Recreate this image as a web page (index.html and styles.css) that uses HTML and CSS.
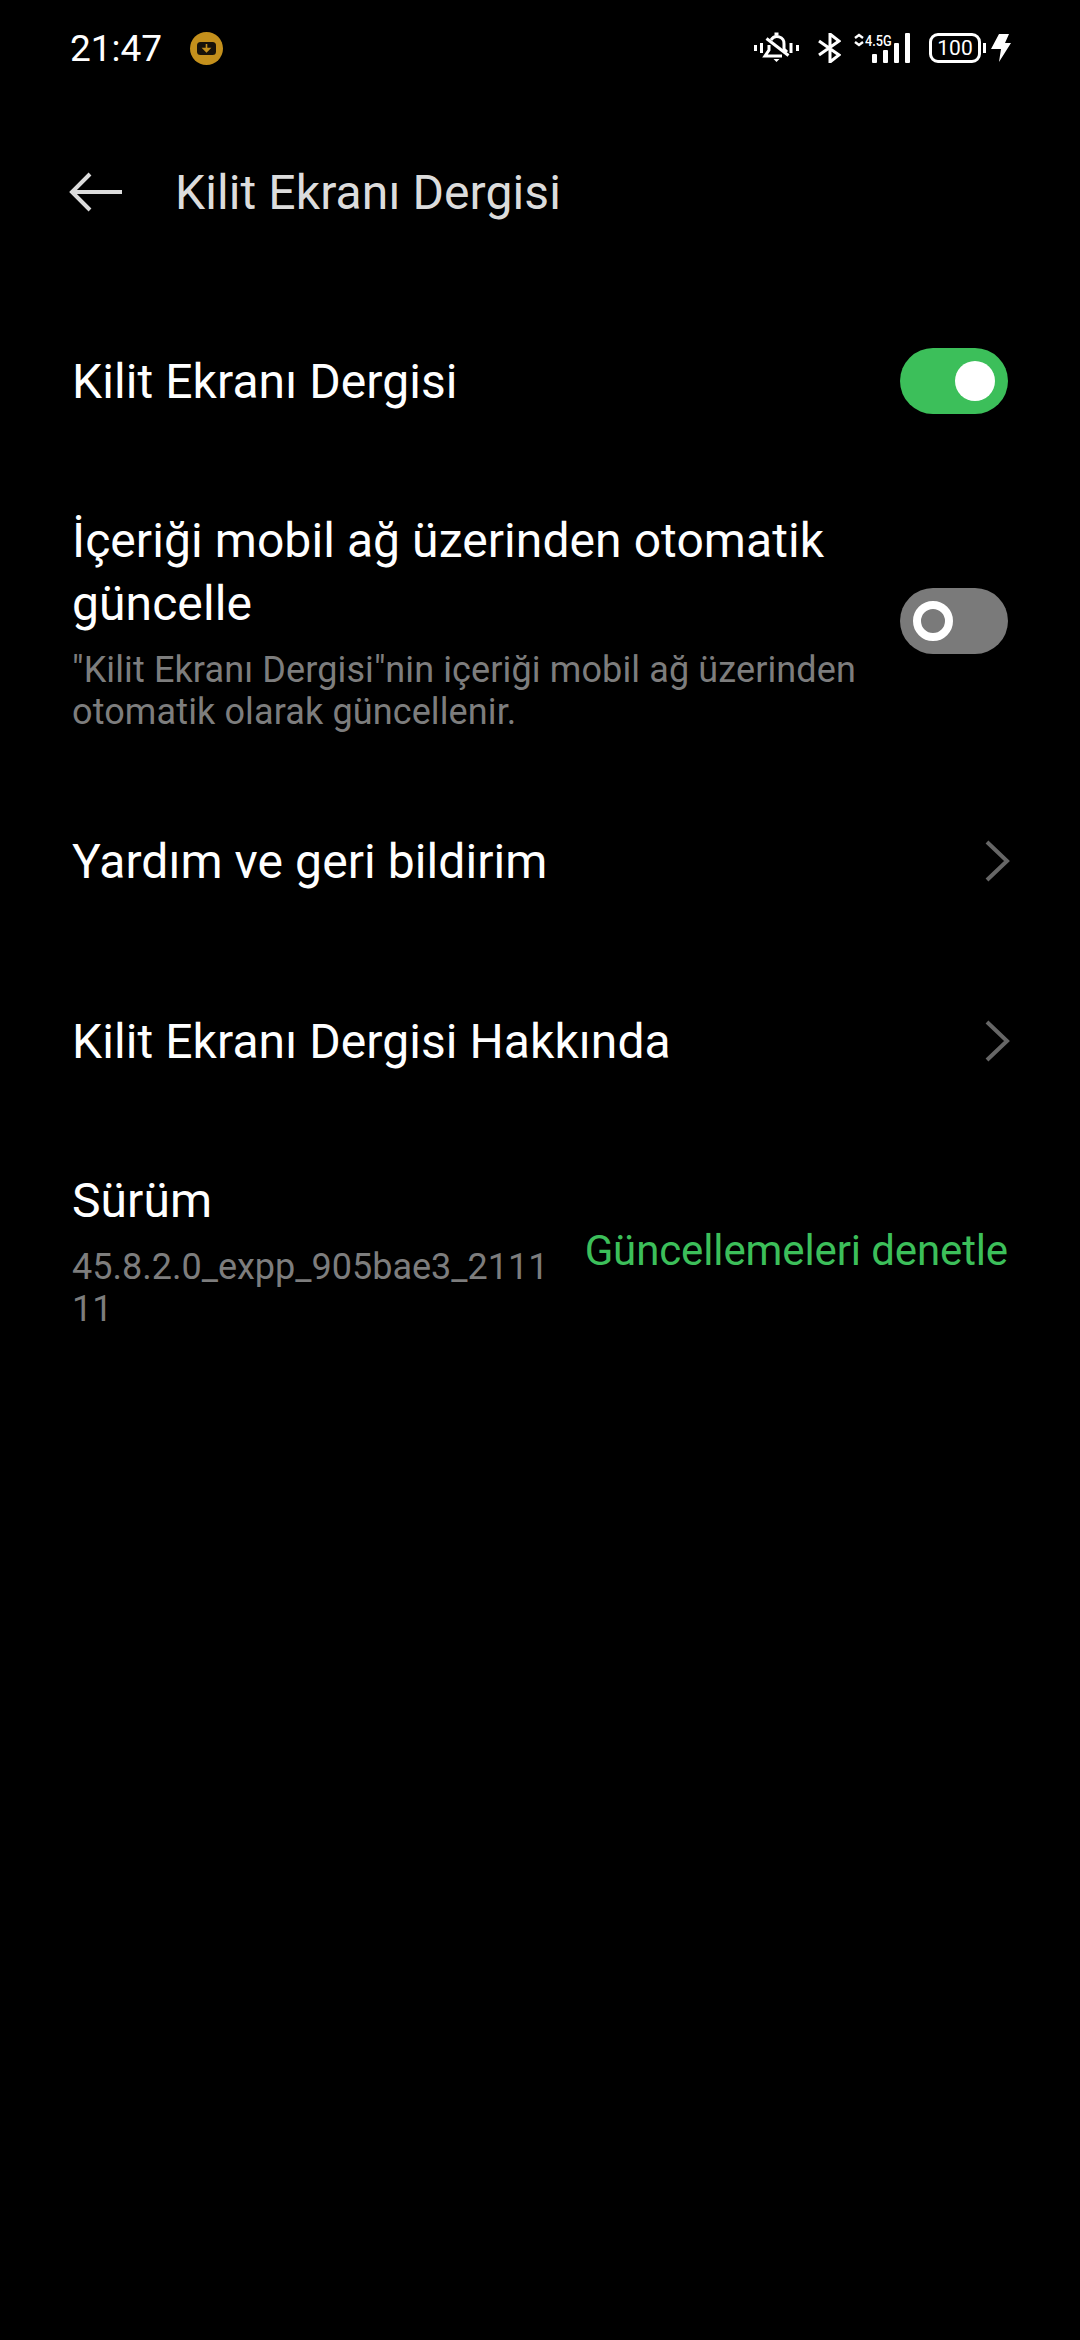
FILE: index.html
```html
<!DOCTYPE html>
<html lang="tr">
<head>
  <meta charset="UTF-8" />
  <meta name="viewport" content="width=device-width, initial-scale=1.0"/>
  <title>Kilit Ekranı Dergisi</title>
  <link rel="stylesheet" href="styles.css">
</head>
<body>
  <div class="status-bar">
    <div class="status-left">
      <span class="clock">21:47</span>
      <svg class="app-badge" width="33" height="33" viewBox="0 0 33 33">
        <circle cx="16.5" cy="16.5" r="16.5" fill="#c4901c"/>
        <rect x="7" y="10" width="19" height="13" rx="3.5" fill="#17120a"/>
        <path d="M16.5 12v5M13.5 16.5h6l-3 3z" stroke="#c4901c" stroke-width="1.6" fill="#c4901c"/>
      </svg>
    </div>
    <div class="status-right">
      <svg class="icon-bell" width="46" height="32" viewBox="0 0 46 32">
        <g fill="none" stroke="#fff" stroke-width="3">
          <path d="M1.5 13v6M7.5 11v10M37 11v10M43.5 13v6"/>
          <path d="M15 13v5l-4 6h17"/>
          <path d="M17 8a7 7 0 0 1 13 4v5l3 3"/>
          <path d="M12.5 6.500l22 17"/>
          <path d="M20.500 2h4"/>
        </g>
        <path d="M19.500 27h6l-3 3z" fill="#fff"/>
      </svg>
      <svg class="icon-bt" width="23" height="30" viewBox="0 0 23 30">
        <path d="M1 8l20 14-9 7V1l9 7L1 22" fill="none" stroke="#fff" stroke-width="3"/>
      </svg>
      <div class="net">
        <svg width="10" height="14" viewBox="0 0 10 14">
          <path d="M1 5l4-3 4 3M1 9l4 3 4-3" fill="none" stroke="#fff" stroke-width="2.4"/>
        </svg>
        <span class="net-label">4.5G</span>
        <div class="bars">
          <span class="bar bar-1"></span>
          <span class="bar bar-2"></span>
          <span class="bar bar-3"></span>
          <span class="bar bar-4"></span>
        </div>
      </div>
      <div class="battery">
        <div class="battery-body">100</div>
        <span class="battery-tip"></span>
      </div>
      <svg class="icon-bolt" width="20" height="28" viewBox="0 0 20 28">
        <path d="M8 0h10l-4 9h6L8 28l2-13H0z" fill="#fff"/>
      </svg>
    </div>
  </div>

  <div class="header">
    <svg class="back" width="54" height="42" viewBox="0 0 54 42">
      <path d="M53 21H3M21 3L3 21l18 18" fill="none" stroke="#dcdcdc" stroke-width="4"/>
    </svg>
    <h1>Kilit Ekranı Dergisi</h1>
  </div>

  <div class="list">
    <div class="row row-first">
      <div class="row-text"><div class="row-title">Kilit Ekranı Dergisi</div></div>
      <div class="switch switch-on"><span class="knob"></span></div>
    </div>

    <div class="row row-second">
      <div class="row-text">
        <div class="row-title">İçeriği mobil ağ üzerinden otomatik güncelle</div>
        <div class="row-sub">"Kilit Ekranı Dergisi"nin içeriği mobil ağ üzerinden otomatik olarak güncellenir.</div>
      </div>
      <div class="switch switch-off"><span class="knob"></span></div>
    </div>

    <div class="row row-link">
      <div class="row-text"><div class="row-title">Yardım ve geri bildirim</div></div>
      <svg class="chevron" width="26" height="44" viewBox="0 0 26 44">
        <path d="M3 3l20 19L3 41" fill="none" stroke="#666" stroke-width="4"/>
      </svg>
    </div>

    <div class="row row-link">
      <div class="row-text"><div class="row-title">Kilit Ekranı Dergisi Hakkında</div></div>
      <svg class="chevron" width="26" height="44" viewBox="0 0 26 44">
        <path d="M3 3l20 19L3 41" fill="none" stroke="#666" stroke-width="4"/>
      </svg>
    </div>

    <div class="row row-version">
      <div class="version-text">
        <div class="row-title">Sürüm</div>
        <div class="row-sub">45.8.2.0_expp_905bae3_211111</div>
      </div>
      <div class="update">Güncellemeleri denetle</div>
    </div>
  </div>
</body>
</html>
```

FILE: styles.css
```css
:root {
  --green: #3cbf5a;
  --muted: #7d7d7d;
}

* {
  box-sizing: border-box;
}

body {
  margin: 0;
  width: 1080px;
  height: 2340px;
  background: #000;
  color: #fff;
  font-family: Roboto, "Noto Sans", sans-serif;
  overflow: hidden;
}

.status-bar {
  height: 96px;
  padding: 0 69px 0 70px;
  display: flex;
  justify-content: space-between;
  align-items: center;
}

.status-left {
  display: flex;
  align-items: center;
  gap: 28px;
}

.clock {
  font-size: 37px;
}

.status-right {
  display: flex;
  align-items: center;
}

.icon-bell {
  margin-right: 18px;
}

.icon-bt {
  margin-right: 13px;
}

.net {
  position: relative;
  width: 56px;
  height: 30px;
  margin-right: 19px;
}

.net svg {
  position: absolute;
  left: 0;
  top: 0;
}

.net-label {
  position: absolute;
  left: 11px;
  top: 0;
  font-size: 15px;
  line-height: 16px;
  font-weight: 500;
  transform: scaleX(.85);
  transform-origin: left;
}

.bars {
  position: absolute;
  right: 0;
  bottom: 0;
  display: flex;
  align-items: flex-end;
  gap: 6px;
}

.bar {
  width: 5px;
  background: #fff;
  border-radius: 1px;
}

.bar-1 { height: 9px; }
.bar-2 { height: 13px; }
.bar-3 { height: 20px; }
.bar-4 { height: 30px; }

.battery {
  display: flex;
  align-items: center;
  margin-right: 5px;
}

.battery-body {
  width: 52px;
  height: 30px;
  border: 3px solid #fff;
  border-radius: 9px;
  font-size: 21px;
  line-height: 24px;
  text-align: center;
}

.battery-tip {
  width: 3px;
  height: 10px;
  margin-left: 2px;
  background: #fff;
}

.header {
  height: 192px;
  padding-left: 69px;
  display: flex;
  align-items: center;
}

.back {
  margin-right: 52px;
}

h1 {
  margin: 0;
  font-size: 48px;
  font-weight: 400;
  letter-spacing: .1px;
  color: #dcdcdc;
}

.list {
  padding: 0 72px;
}

.row {
  display: flex;
  align-items: center;
  justify-content: space-between;
}

.row-first {
  margin-top: 60px;
  height: 66px;
}

.row-second {
  margin-top: 95px;
}

.row-link {
  height: 60px;
}

.row-second + .row-link {
  margin-top: 98px;
}

.row-link + .row-link {
  margin-top: 120px;
}

.row-version {
  margin-top: 98px;
}

.row-text {
  width: 800px;
}

.row-title {
  font-size: 48px;
  line-height: 63px;
  letter-spacing: .08px;
}

.row-sub {
  margin-top: 14px;
  font-size: 36px;
  line-height: 42px;
  letter-spacing: .12px;
  color: var(--muted);
}

.switch {
  position: relative;
  flex: none;
  width: 108px;
  height: 66px;
  border-radius: 33px;
}

.knob {
  position: absolute;
  top: 13px;
  width: 40px;
  height: 40px;
  border-radius: 50%;
}

.switch-on {
  background: var(--green);
}

.switch-on .knob {
  right: 13px;
  background: #fff;
}

.switch-off {
  background: #7a7a7a;
}

.switch-off .knob {
  left: 13px;
  border: 8px solid #fff;
}

.chevron {
  flex: none;
  margin-right: -2px;
}

.version-text {
  width: 480px;
}

.version-text .row-sub {
  letter-spacing: 0;
  word-break: break-all;
}

.update {
  font-size: 42px;
  letter-spacing: -.12px;
  color: var(--green);
  position: relative;
  top: 1px;
}
```
